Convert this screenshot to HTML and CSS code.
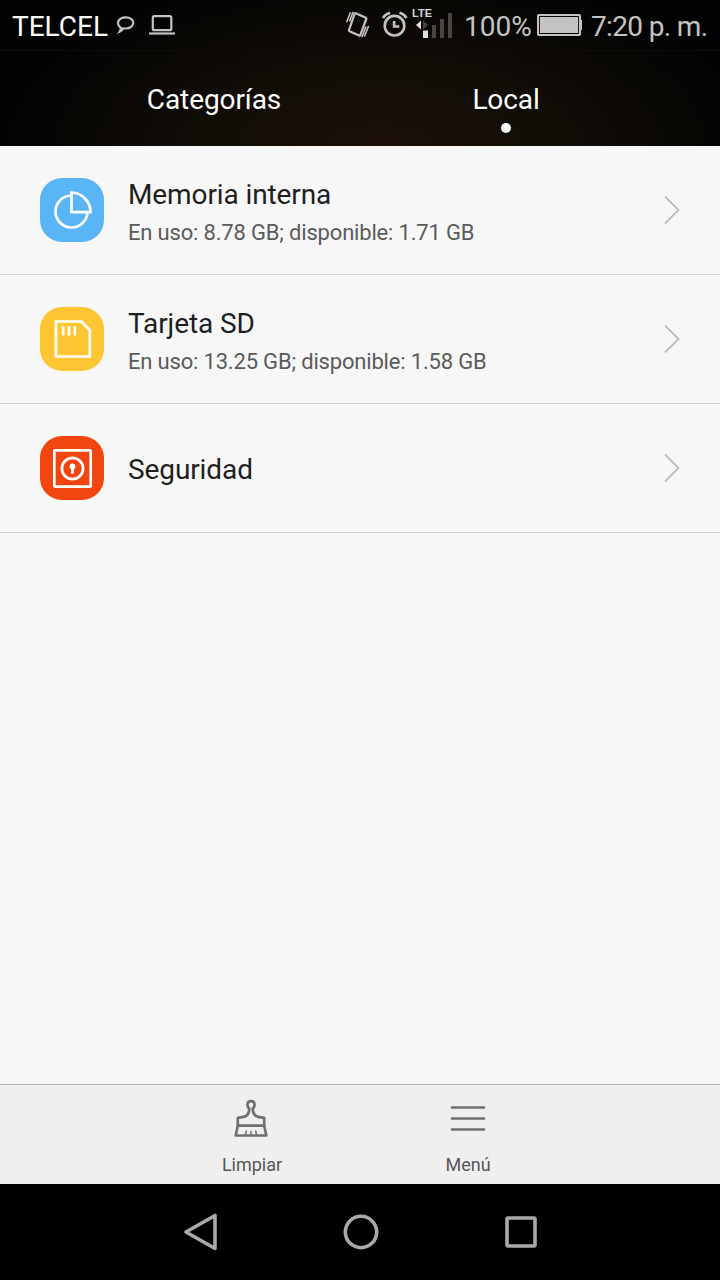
FILE: index.html
```html
<!DOCTYPE html>
<html lang="es">
<head>
<meta charset="utf-8">
<title>Archivos</title>
<link rel="stylesheet" href="styles.css">
</head>
<body>
<div class="screen">
  <header class="top">
    <div class="status">
      <span class="carrier">TELCEL</span>
      <svg class="bubble" width="20" height="20" viewBox="0 0 20 20"><path d="M4.6 12.5C2.2 10.8 1.500 8.600 2.300 6.400 3.400 3.700 6.300 2.300 9.800 2.300c4.200 0 7.500 2.300 7.500 5.500s-3.300 5.700-7.500 5.700c-1 0-1.800-.1-2.600-.3-.7 1.500-1.800 2.500-3.300 3.200.7-1.100 1-2.500.7-3.900z"/></svg>
      <svg class="laptop" width="26" height="20" viewBox="0 0 26 20"><rect x="3.800" y="1.200" width="18.500" height="14" rx="1.500"/><path d="M0 18.500h26"/></svg>
      <span class="spacer"></span>
      <svg class="vibrate" width="26" height="30" viewBox="0 0 26 30"><path class="phone" d="M10.800 3.200l10 4.600q.8.400.5 1.200l-6 16.100q-.4.900-1.200.5l-9.600-4.400q-.8-.4-.5-1.200L9.700 3.700q.3-.8 1.100-.5z"/><path class="waves" d="M5.500 2.200L1.600 12.300M8.200 1.700L4.500 11.500M23.600 16l-4.200 10.500M21 16.500l-4 10.500"/></svg>
      <svg class="alarm" width="26" height="28" viewBox="0 0 26 28"><circle cx="12.500" cy="15.700" r="9.800"/><path d="M12.100 11v5.500h5.200"/><path d="M1 8Q3 4.400 8 2.800M24.500 8Q22.500 4.400 17.500 2.800"/></svg>
      <svg class="signal" width="42" height="34" viewBox="0 0 42 34"><text x="0" y="12" textLength="20" lengthAdjust="spacingAndGlyphs">LTE</text><path class="on" d="M9 15.500v9L4 20zM11 25.500h5V33h-5z"/><path class="off" d="M11 15.500v9l5-4.500zM20 20h4v13h-4zM28 14h4v19h-4zM36 8h4v25h-4z"/></svg>
      <span class="percent">100%</span>
      <svg class="battery" width="46" height="24" viewBox="0 0 46 24"><rect class="case" x="1" y="1" width="42" height="20" rx="1.500"/><path class="charge" d="M3 3h38v16H3zM43.500 6H45v10h-1.500z"/></svg>
      <span class="clock">7:20 p. m.</span>
    </div>
    <nav class="tabs">
      <a class="tab tab-categories">Categorías</a>
      <a class="tab tab-local">Local<span class="dot"></span></a>
    </nav>
  </header>

  <main class="list">
    <div class="row">
      <svg class="badge blue" width="64" height="64" viewBox="0 0 64 64"><path d="M31 17.500A16 16 0 1 0 47.500 34.300M31.500 14.500v19.700h19A19.500 19.500 0 0 0 31.500 14.500z"/></svg>
      <div class="info"><div class="name">Memoria interna</div><div class="detail">En uso: 8.78 GB; disponible: 1.71 GB</div></div>
      <svg class="chevron" width="18" height="30" viewBox="0 0 18 30"><path d="M2 1.500L15.500 15 2 28.500"/></svg>
    </div>
    <div class="row">
      <svg class="badge yellow" width="64" height="64" viewBox="0 0 64 64"><path d="M16 14.500h25.500l8.300 8.800v26.200H16z"/><path d="M23.200 19v9.500M29 19v9.500M34.800 19v9.500"/></svg>
      <div class="info"><div class="name">Tarjeta SD</div><div class="detail">En uso: 13.25 GB; disponible: 1.58 GB</div></div>
      <svg class="chevron" width="18" height="30" viewBox="0 0 18 30"><path d="M2 1.500L15.500 15 2 28.500"/></svg>
    </div>
    <div class="row">
      <svg class="badge red" width="64" height="64" viewBox="0 0 64 64"><rect x="14.300" y="14.300" width="36.400" height="36.400" rx="1"/><circle cx="32.500" cy="32.500" r="10.600"/><circle class="solid" cx="32.500" cy="30.500" r="2.900"/><path d="M32.500 31v6.800"/></svg>
      <div class="info"><div class="name name-single">Seguridad</div></div>
      <svg class="chevron" width="18" height="30" viewBox="0 0 18 30"><path d="M2 1.500L15.500 15 2 28.500"/></svg>
    </div>
  </main>

  <footer class="actions">
    <div class="action">
      <svg width="36" height="40" viewBox="0 0 36 40"><path d="M15.300 10.500C12.600 8.500 12.600 3.200 17 3.200s4.400 5.300 1.700 7.300c0 4.500 1.800 7.700 5.700 8.400l5.800 1v7.800l2.100 9.800H1.700l2.100-9.800v-7.800l5.800-1c3.900-.7 5.700-3.900 5.700-8.400z"/><path d="M3.800 27.700h26.400"/><path class="thin" d="M11.500 37l.8-4M17 37v-3.500M22.500 37l-.8-4"/></svg>
      <span>Limpiar</span>
    </div>
    <div class="action">
      <svg width="36" height="40" viewBox="0 0 36 40"><path d="M2 9.500h32M2 20.500h32M2 31.500h32"/></svg>
      <span>Menú</span>
    </div>
  </footer>

  <nav class="keys">
    <svg width="40" height="40" viewBox="0 0 40 40"><path d="M6 20L35 3.500v33z"/></svg>
    <svg width="40" height="40" viewBox="0 0 40 40"><circle cx="21" cy="20" r="15.700"/></svg>
    <svg width="40" height="40" viewBox="0 0 40 40"><rect x="7" y="6" width="28" height="28" rx="1"/></svg>
  </nav>
</div>
</body>
</html>
```
FILE: styles.css
```css
* { box-sizing: border-box; }
body { margin: 0; font-family: Roboto, "Noto Sans", sans-serif; }
svg { display: block; flex: none; fill: none; }
.screen { width: 720px; height: 1280px; display: flex; flex-direction: column; background: #f7f7f7; }

.top { height: 146px; background: radial-gradient(ellipse 400px 190px at 380px 150px, #1b1008, #110d07 45%, #020202); color: #fff; }
.status { height: 51px; display: flex; align-items: flex-start; padding: 0 13px 0 12px; font-size: 28px; line-height: 32px; white-space: nowrap; border-bottom: 1px solid #100c09; color: #c4c3c1; }
.status span { margin-top: 11px; }
.carrier { color: #fff; width: 104px; }
.spacer { flex: 1; }
.status svg { stroke: #c4c3c1; stroke-width: 2.2; }
.bubble { margin-top: 15px; }
.laptop { margin: 15px 0 0 13px; }
.vibrate { margin: 10px 11px 0 0; }
.vibrate .waves { stroke-width: 1.6; }
.alarm { margin: 10px 4px 0 0; }
.status .alarm { stroke-width: 2.6; }
.signal { margin: 5px 10px 0 0; }
.status .signal { stroke: none; }
.signal text { font: bold 11px "Liberation Sans", sans-serif; fill: #d4d3d1; }
.signal .on { fill: #e0dfdd; }
.signal .off { fill: #484542; }
.percent { width: 73px; }
.battery { margin: 14px 8px 0 0; }
.battery .charge { fill: #c4c3c1; stroke: none; }
.clock { width: 116px; letter-spacing: -0.65px; }

.tabs { display: grid; grid-template-columns: 428px 156px; height: 95px; }
.tab { text-align: center; font-size: 28px; letter-spacing: -0.1px; line-height: 32px; padding-top: 33px; }
.tab-local { display: flex; flex-direction: column; align-items: center; }
.dot { width: 10px; height: 10px; border-radius: 50%; background: #fff; margin-top: 7px; }

.list { flex: 1; }
.row { height: 129px; border-bottom: 1px solid #d4d4d4; display: flex; align-items: center; padding: 0 39px 0 40px; }
.badge { border-radius: 22px; stroke: #fff; stroke-width: 2.700; }
.blue { background: #5ab5f7; }
.yellow { background: #ffc633; }
.red { background: #f2450f; }
.solid { fill: #fff; stroke: none; }
.info { flex: 1; margin-left: 24px; padding-top: 4px; white-space: nowrap; }
.name { font-size: 28px; line-height: 34px; letter-spacing: -0.1px; color: #1f1f1f; }
.detail { font-size: 22px; line-height: 28px; letter-spacing: -0.18px; margin-top: 7px; color: #5b5b5b; }
.chevron { stroke: #bdbdbd; stroke-width: 1.8; }

.actions { height: 100px; border-top: 1px solid #b5b5b5; background: #efefef; display: flex; justify-content: center; padding-top: 13px; }
.action { width: 216px; display: flex; flex-direction: column; align-items: center; gap: 15px; font-size: 18px; line-height: 24px; color: #565656; }
.action svg { stroke: #707070; stroke-width: 2.700; stroke-linejoin: round; stroke-linecap: round; }
.action .thin { stroke-width: 1.5; }
.keys { height: 96px; background: #000; display: flex; justify-content: center; align-items: center; gap: 120px; }
.keys svg { stroke: #a9a9a9; stroke-width: 3.600; stroke-linejoin: round; }
```
